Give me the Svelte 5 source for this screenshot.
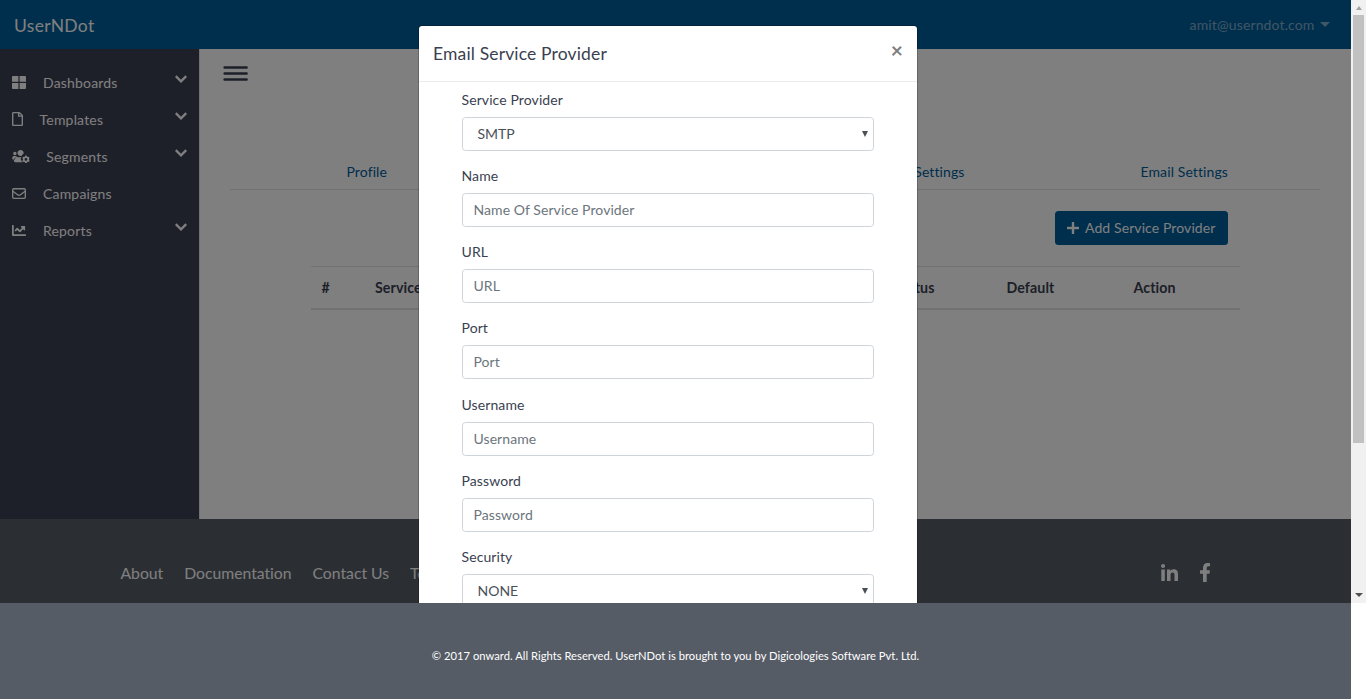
<script>
  const nav = [
    { label: 'Dashboards', icon: 'grid', width: 14, gap: 17, open: true },
    { label: 'Templates', icon: 'file', width: 11, gap: 16.6, open: true },
    { label: 'Segments', icon: 'users', width: 18, gap: 16.3, open: true },
    { label: 'Campaigns', icon: 'mail', width: 14, gap: 17, open: false },
    { label: 'Reports', icon: 'chart', width: 14, gap: 17, open: true }
  ];
  const tabs = ['Profile', '', 'Account Settings', 'Email Settings'];
  const fields = [
    { label: 'Service Provider', value: 'SMTP' },
    { label: 'Name', hint: 'Name Of Service Provider' },
    { label: 'URL', hint: 'URL' },
    { label: 'Port', hint: 'Port' },
    { label: 'Username', hint: 'Username' },
    { label: 'Password', hint: 'Password' },
    { label: 'Security', value: 'NONE' }
  ];
  const links = ['About', 'Documentation', 'Contact Us', 'Terms'];
</script>

<div class="window">
  <div class="viewport">
    <div class="page">
      <header>
        <span class="brand">UserNDot</span>
        <span class="account">amit@userndot.com <i class="caret"></i></span>
      </header>
      <div class="middle">
        <nav>
          {#each nav as item}
            <div class="item">
              <span class="ico" style="width:{item.width}px;margin-right:{item.gap}px">
                {#if item.icon === 'grid'}
                  <svg width="14" height="13" viewBox="0 0 14 13"><path d="M1 0h5.4v5.8H0V1a1 1 0 0 1 1-1zM7.6 0H13a1 1 0 0 1 1 1v4.8H7.6zM0 7h6.4v6H1a1 1 0 0 1-1-1zM7.6 7H14v5a1 1 0 0 1-1 1H7.6z"/></svg>
                {:else if item.icon === 'file'}
                  <svg width="11" height="14" viewBox="0 0 384 512" preserveAspectRatio="none"><path d="M370 98 286 14A48 48 0 0 0 252 0H48C21 0 0 21 0 48v416c0 27 21 48 48 48h288c27 0 48-21 48-48V132c0-13-5-25-14-34zM332 128h-76V52zM48 464V48h160v104c0 13 11 24 24 24h104v288z"/></svg>
                {:else if item.icon === 'users'}
                  <svg width="18" height="14" viewBox="0 0 640 512"><path fill-rule="evenodd" d="M96 224a64 64 0 1 0 0-128 64 64 0 0 0 0 128zm224 32c11 0 22-2 32-5 6-34 31-61 60-77a112 112 0 1 0-92 82zM174 275a64 64 0 0 0-46-19H64a64 64 0 0 0-64 64v32c0 18 14 32 32 32h66c6-47 35-87 76-109zm184 181c-28-22-46-52-48-86-4-33 9-65 29-82h-27a154 154 0 0 1-64 16 154 154 0 0 1-64-16h-9c-63 0-115 52-115 115v29a48 48 0 0 0 48 48h270zM610 358l26-15c-6-25-18-45-35-62l-27 15a100 100 0 0 0-37-21v-30a140 140 0 0 0-72 0v30a100 100 0 0 0-37 21l-27-15a140 140 0 0 0-35 62l26 15a102 102 0 0 0 0 43l-26 15c7 24 19 45 35 62l27-15c11 9 23 17 37 21v30c24 6 48 6 72 0v-30c14-4 26-12 37-21l27 15c17-17 29-38 35-62l-26-15a102 102 0 0 0 0-43zM501 429a49 49 0 1 1 0-98 49 49 0 0 1 0 98z" /></svg>
                {:else if item.icon === 'mail'}
                  <svg width="14" height="11" viewBox="0 0 14 11" fill="none" stroke="currentColor" stroke-width="1.35"><rect x=".7" y=".7" width="12.6" height="9.6" rx="1"/><path d="m.9 3.2 4.7 3.6q1.4 1 2.8 0l4.7-3.6"/></svg>
                {:else}
                  <svg width="14" height="11" viewBox="0 64 512 384" preserveAspectRatio="none"><path d="M496 384H64V80a16 16 0 0 0-16-16H16A16 16 0 0 0 0 80v336c0 18 14 32 32 32h464a16 16 0 0 0 16-16v-32a16 16 0 0 0-16-16zM464 96H346c-21 0-32 26-17 41l32 32-73 73-73-73a32 32 0 0 0-46 0l-68 69a16 16 0 0 0 0 22l23 23c6 6 16 6 22 0l46-46 73 74c13 12 33 12 46 0l96-96 32 32c15 15 41 4 41-17V112a16 16 0 0 0-16-16z"/></svg>
                {/if}
              </span>
              <span class="name">{item.label}</span>
              {#if item.open}
                <svg class="chev" width="12" height="8" viewBox="0 0 12 8" fill="none" stroke="currentColor" stroke-width="2.3"><path d="m.8 1.100 5.2 5.2 5.200-5.200"/></svg>
              {/if}
            </div>
          {/each}
        </nav>
        <main>
          <svg class="burger" width="25" height="15" viewBox="0 0 25 15"><path d="M1.600 1.500h22M1.600 7.500h22M1.600 13.500h22" stroke="#3a3f51" stroke-width="2.500" stroke-linecap="round"/></svg>
          <div class="tabs">
            {#each tabs as tab}<span>{tab}</span>{/each}
          </div>
          <div class="actions">
            <button><svg width="12" height="12" viewBox="0 0 12 12"><path d="M5.200 0h1.600q.4 0 .4.400v4.400h4.400q.4 0 .4.400v1.600q0 .4-.4.400H7.200v4.400q0 .4-.4.400H5.200q-.4 0-.4-.4V7.200H.4q-.4 0-.4-.4V5.200q0-.4.4-.4h4.400V.4q0-.4.4-.4z"/></svg><span>Add Service Provider</span></button>
          </div>
          <div class="thead">
            <span>#</span><span>Service</span><span>Status</span><span>Default</span><span>Action</span>
          </div>
        </main>
      </div>
      <footer>
        <div class="links">{#each links as link}<span>{link}</span>{/each}</div>
        <div class="social">
          <svg class="in" width="17" height="17" viewBox="0 0 17 17"><path d="M.3 5.600h3.500V17H.3zM2.050 0a2 2 0 1 1 0 4.050 2 2 0 0 1 0-4.050zM6 5.600h3.300v1.600c.5-.9 1.600-1.900 3.400-1.900 3.600 0 4.300 2.300 4.300 5.400V17h-3.500v-5.500c0-1.300 0-3-1.850-3s-2.100 1.400-2.100 2.900V17H6z"/></svg>
          <svg class="fb" width="10" height="19" viewBox="22 0 272 512" preserveAspectRatio="none"><path d="m279 288 14-93h-89v-60c0-25 12-50 52-50h41V6s-37-6-72-6c-73 0-121 44-121 125v70H23v93h81v224h100V288z"/></svg>
        </div>
      </footer>
    </div>
    <div class="scrollbar"><i class="up"></i><i class="thumb"></i><i class="down"></i></div>
    <div class="backdrop"></div>
    <section class="modal">
      <div class="title"><h5>Email Service Provider</h5><span class="close">×</span></div>
      <div class="form">
        {#each fields as field}
          <div class="field">
            <span class="label">{field.label}</span>
            {#if field.value}
              <div class="control select">{field.value}<i></i></div>
            {:else}
              <div class="control">{field.hint}</div>
            {/if}
          </div>
        {/each}
      </div>
    </section>
  </div>
  <div class="copyright">© 2017 onward. All Rights Reserved. UserNDot is brought to you by Digicologies Software Pvt. Ltd.</div>
</div>

<style>
  :global(body) { background: #fff; overflow: hidden; }
  * { box-sizing: border-box; }
  .window { width: 1366px; height: 699px; font: 14px/21px Lato, sans-serif; letter-spacing: .1px; color: #3a3f51; overflow: hidden; }
  .viewport { position: relative; display: flex; height: 603px; overflow: hidden; }
  .page { width: 1351px; display: flex; flex-direction: column; }
  header { height: 49px; background: #005c9a; display: flex; justify-content: space-between; align-items: center; padding: 2px 21px 0 14px; color: #fff; }
  .brand { font-size: 17.5px; letter-spacing: .3px; }
  .account { color: rgba(255,255,255,.5); display: flex; align-items: center; margin-top: -2px; letter-spacing: .13px; }
  .caret { border: 5px solid transparent; border-top-color: currentColor; border-bottom: 0; margin: -1px 0 0 5.500px; }
  .middle { height: 470px; display: flex; }
  nav { width: 199px; background: #3c4053; padding-top: 15px; color: #fff; letter-spacing: .18px; }
  .item { height: 37px; display: flex; align-items: center; padding: 0 12px; }
  .ico { display: flex; flex: none; margin-top: -1px; }
  svg { display: block; fill: currentColor; }
  .name { flex: 1; margin-top: -1px; }
  .chev { fill: none; margin-top: -8px; }
  svg[fill="none"] { fill: none; }
  main { flex: 1; background: #fff; border-left: 1px solid #dee2e6; }
  .burger { margin: 17px 0 0 23px; }
  .tabs { margin: 74px 31px 0 30px; height: 35px; border-bottom: 1px solid #dee2e6; display: flex; color: #005c9a; line-height: 33px; }
  .tabs span { flex: 1; text-align: center; padding-left: 1px; }
  .actions { display: flex; justify-content: flex-end; margin: 21px 123px 0 0; }
  button { width: 173px; height: 34px; border: 0; border-radius: 3.500px; background: #005c9a; color: #fff; display: flex; align-items: center; padding: 0 12px; gap: 6px; font: inherit; letter-spacing: inherit; white-space: nowrap; }
  button span { margin-top: -2px; }
  .thead { margin: 21px 111px 0 111px; height: 44px; border-top: 1px solid #dee2e6; border-bottom: 2px solid #dee2e6; display: grid; grid-template-columns: 53.500px 519.500px 112px 127px 1fr; line-height: 41px; font-weight: 700; font-size: 14.200px; }
  .thead span { padding-left: 10.500px; white-space: nowrap; }
  footer { height: 84px; background: #565c66; color: #fff; display: flex; justify-content: space-between; padding: 44px 141px 0 120.500px; font-size: 15.750px; letter-spacing: -.02px; }
  .links { display: flex; gap: 21px; margin-top: -1px; }
  .social { display: flex; gap: 21.500px; margin-right: .500px; }
  .in { margin-top: 1px; }
  .scrollbar { width: 15px; background: #f1f1f1; display: flex; flex-direction: column; align-items: center; position: relative; z-index: 2; }
  .up { border: 3.500px solid transparent; border-top: 0; border-bottom: 4px solid #a3a3a3; margin-top: 6px; }
  .thumb { width: 11px; height: 428px; background: #c1c1c1; margin-top: 5px; }
  .down { border: 4px solid transparent; border-bottom: 0; border-top: 4px solid #505050; margin-top: auto; margin-bottom: 6px; }
  .backdrop { position: absolute; inset: 0 15px 0 0; background: rgba(0,0,0,.5); }
  .modal { position: absolute; left: 418px; top: 25px; width: 500px; height: 700px; background: #fff; background-clip: padding-box; border: 1px solid rgba(0,0,0,.2); border-radius: 4px; }
  .title { height: 56px; border-bottom: 1px solid #e9ecef; display: flex; justify-content: space-between; padding: 14px; }
  h5 { margin: 0; font-size: 17.500px; font-weight: 400; line-height: 28px; letter-spacing: .15px; }
  .close { font-size: 21px; line-height: 20px; font-weight: 700; color: #7f7f7f; }
  .form { padding: 8px 43px 0; }
  .field { height: 76.150px; }
  .label { display: block; height: 27px; line-height: 19px; margin-left: -.5px; }
  .control { height: 34px; border: 1px solid #ced4da; border-radius: 3.500px; padding: 0 10.500px; line-height: 32.600px; color: #6c757d; letter-spacing: .07px; }
  .select { display: flex; align-items: center; justify-content: space-between; color: #495057; padding: 0 5px 0 14.500px; line-height: 32px; letter-spacing: 0; }
  .select i { border: 3px solid transparent; border-top: 6px solid #495057; border-bottom: 0; }
  .copyright { width: 1351px; height: 96px; background: #565c66; color: #fff; font-size: 11.200px; line-height: 106px; text-align: center; letter-spacing: .02px; }
</style>
